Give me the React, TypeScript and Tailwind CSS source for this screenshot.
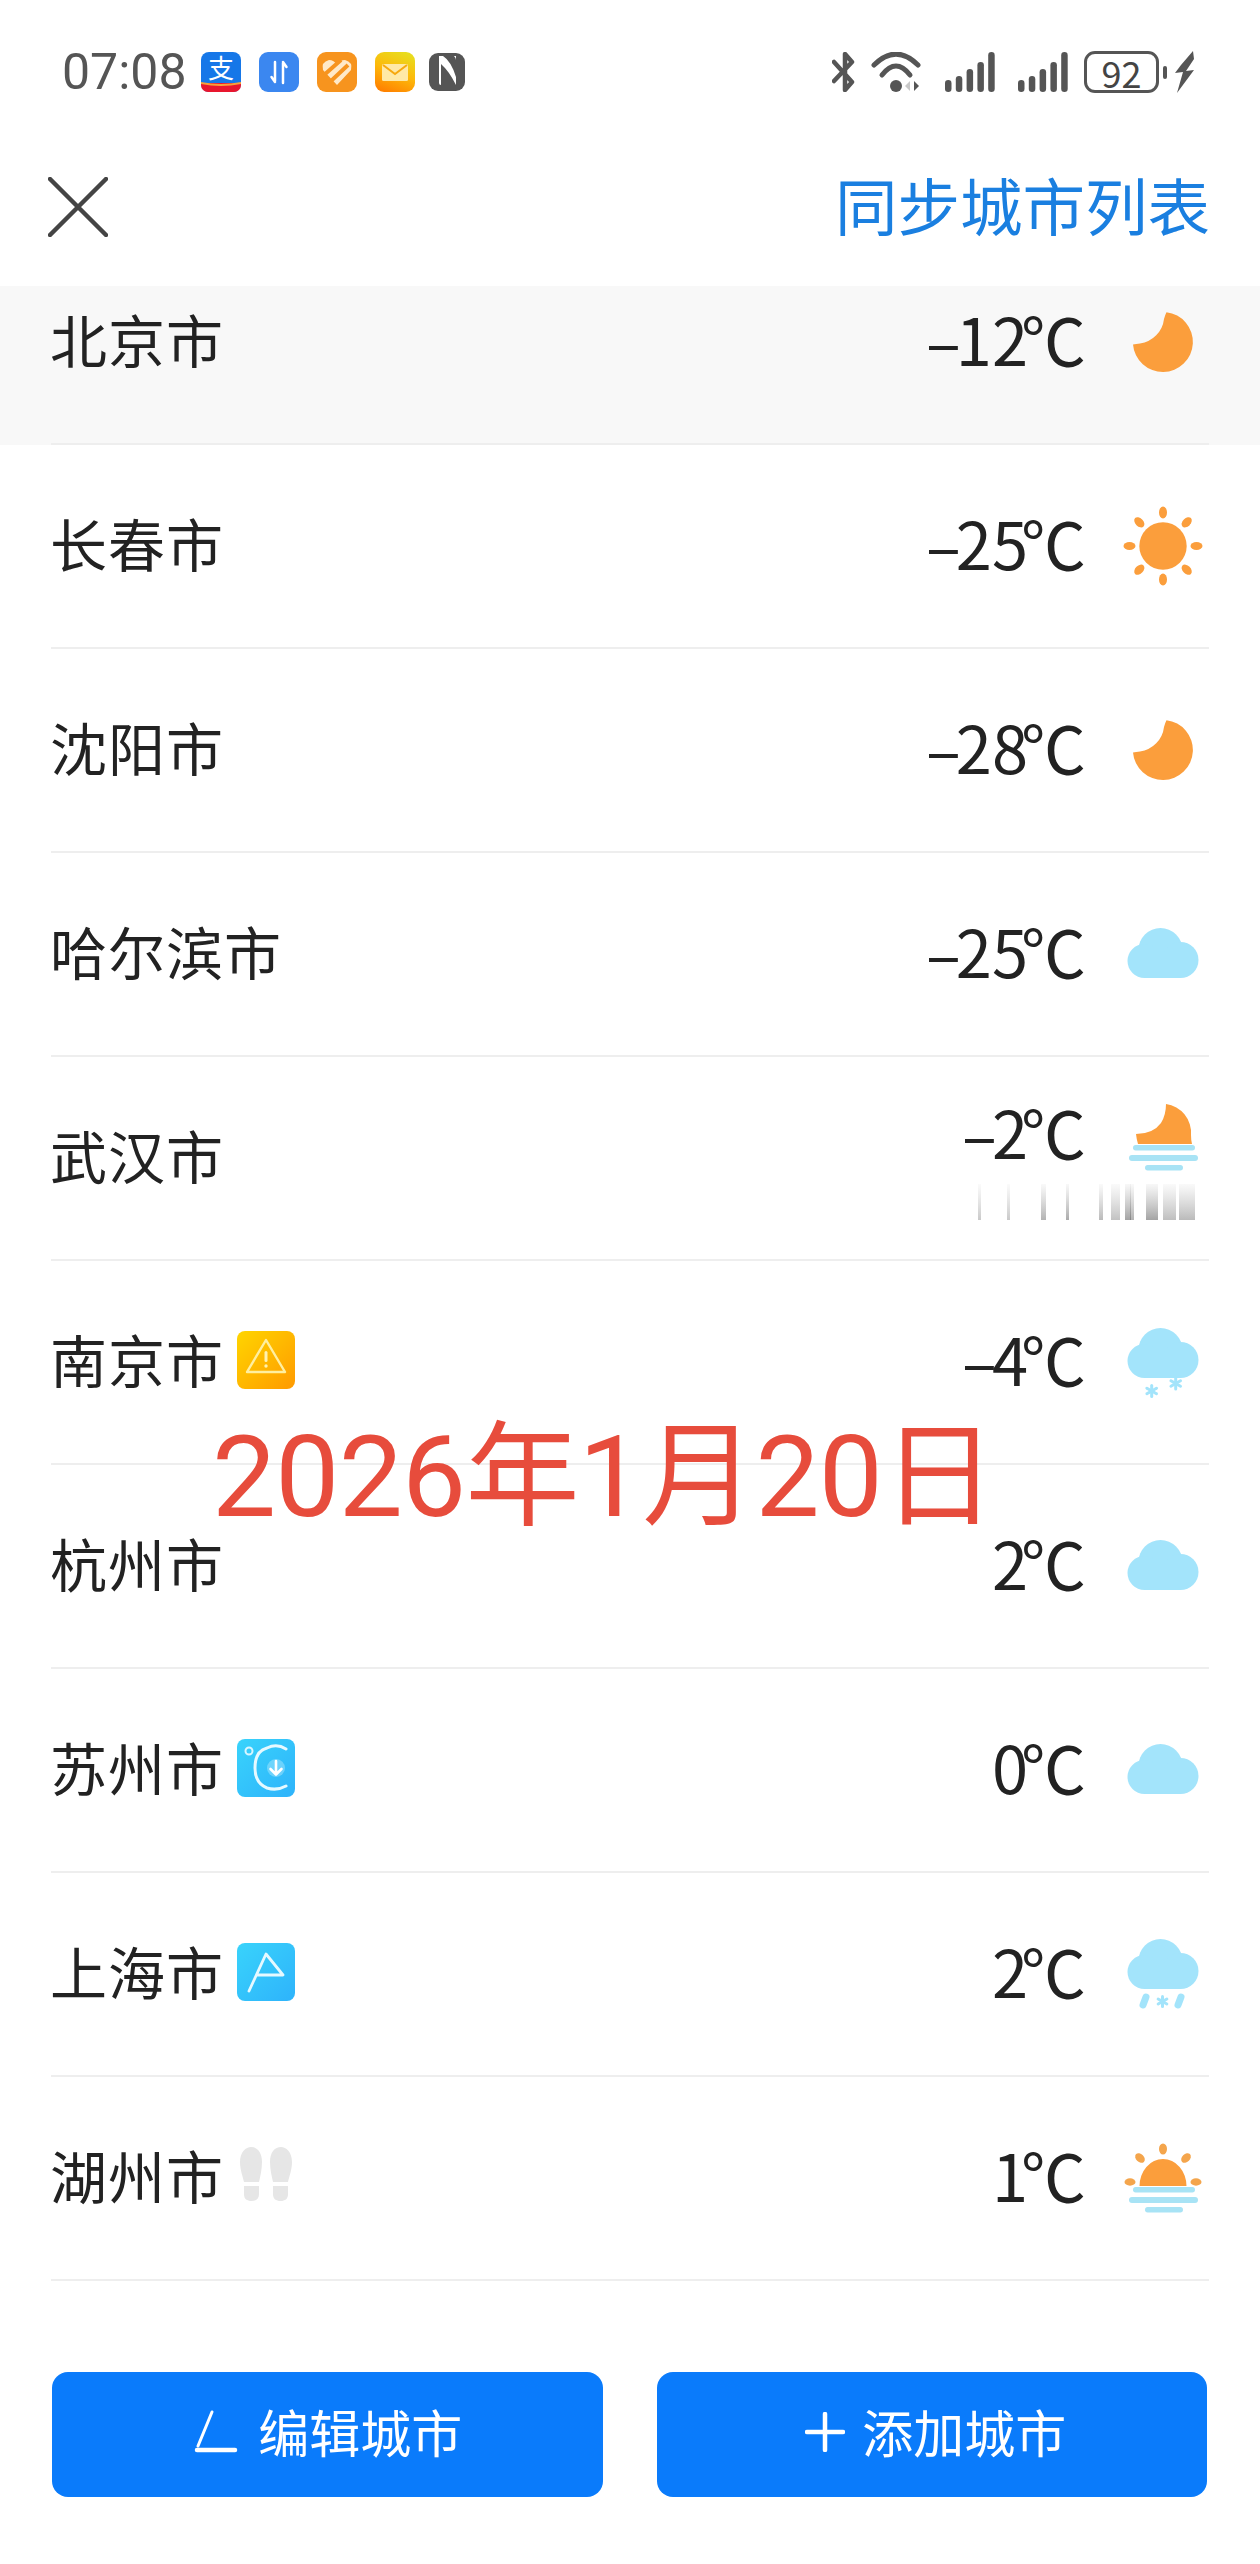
import React from "react";

const BLUE = "#a3e4fb";
const ORANGE = "#fb9e3c";
const HAZE = "#a8e3f5";

function Box({ children }: { children: React.ReactNode }) {
  return (
    <svg width="80" height="80" viewBox="0 0 80 80" className="shrink-0">
      {children}
    </svg>
  );
}

function CloudShape({ y }: { y: number }) {
  return (
    <g fill={BLUE} transform={`translate(4.5 ${y})`}>
      <circle cx="33" cy="22" r="22" />
      <circle cx="53" cy="32" r="18" />
      <circle cx="17" cy="33" r="17" />
      <rect x="17" y="24" width="36" height="26" />
    </g>
  );
}

function Moon() {
  return (
    <Box>
      <path d="M43.5 10.2A30 30 0 1 1 10 42.5Q13 42 17 41.5A28 28 0 0 0 41 17Q42 13 43.5 10.2Z" fill={ORANGE} />
    </Box>
  );
}

function Sun() {
  const rays = [0, 45, 90, 135, 180, 225, 270, 315];
  return (
    <Box>
      <circle cx="40" cy="40" r="23.7" fill={ORANGE} />
      {rays.map((a) => (
        <ellipse key={a} cx="40" cy="6.5" rx="4" ry="6" fill={ORANGE} transform={`rotate(${a} 40 40)`} />
      ))}
    </Box>
  );
}

function HazeLines({ y }: { y: number }) {
  return (
    <g fill={HAZE}>
      <rect x="10" y={y} width="62" height="5.5" rx="2.7" />
      <rect x="6" y={y + 10} width="69" height="6" rx="3" />
      <rect x="22" y={y + 20} width="38" height="5.5" rx="2.7" />
    </g>
  );
}

function MoonHaze() {
  return (
    <Box>
      <path d="M43 7A29 29 0 0 1 68 38Q68 43 69 47H15Q13.500 42 13 37Q30 37 38 26Q43 18 43 7Z" fill={ORANGE} />
      <HazeLines y={48} />
    </Box>
  );
}

function SunHaze() {
  return (
    <Box>
      <path d="M16.500 48A23.500 27 0 0 1 63.500 48Z" fill={ORANGE} />
      <ellipse cx="40" cy="11" rx="4" ry="5.500" fill="#f4a54c" />
      <ellipse cx="17" cy="20" rx="4" ry="5.500" fill="#f4a54c" transform="rotate(-45 17 20)" />
      <ellipse cx="63" cy="20" rx="4" ry="5.500" fill="#f4a54c" transform="rotate(45 63 20)" />
      <ellipse cx="7" cy="44" rx="5.500" ry="3.700" fill="#f4a54c" />
      <ellipse cx="73" cy="44" rx="5.500" ry="3.700" fill="#f4a54c" />
      <HazeLines y={49} />
    </Box>
  );
}

function Cloud() {
  return (
    <Box>
      <CloudShape y={14} />
    </Box>
  );
}

function Flake({ x, y, r }: { x: number; y: number; r: number }) {
  return (
    <g stroke={BLUE} strokeWidth="3" strokeLinecap="round" transform={`translate(${x} ${y})`}>
      <line x1="0" y1={-r} x2="0" y2={r} />
      <line x1={-r * 0.87} y1={-r / 2} x2={r * 0.87} y2={r / 2} />
      <line x1={-r * 0.87} y1={r / 2} x2={r * 0.87} y2={-r / 2} />
    </g>
  );
}

function SnowCloud() {
  return (
    <Box>
      <CloudShape y={6} />
      <Flake x={28.7} y={69} r={5.500} />
      <Flake x={52.7} y={61.500} r={5.500} />
    </Box>
  );
}

function SleetCloud() {
  return (
    <Box>
      <CloudShape y={5} />
      <line x1="23" y1="63" x2="20" y2="71" stroke={BLUE} strokeWidth="7" strokeLinecap="round" />
      <line x1="58" y1="63" x2="55" y2="71" stroke={BLUE} strokeWidth="7" strokeLinecap="round" />
      <Flake x={39.500} y={67.500} r={5} />
    </Box>
  );
}

function WarnTag() {
  return (
    <svg width="58" height="58" viewBox="0 0 58 58" className="block shrink-0">
      <defs>
        <linearGradient id="wg" x1="0" y1="0" x2="1" y2="1">
          <stop offset="0" stopColor="#ffd500" />
          <stop offset="1" stopColor="#ff9a00" />
        </linearGradient>
      </defs>
      <rect width="58" height="58" rx="8" fill="url(#wg)" />
      <path d="M29 9L48 41H10Z" fill="none" stroke="#ffefa0" strokeWidth="2.400" strokeLinejoin="round" />
      <rect x="27.500" y="20" width="3" height="11" rx="1.500" fill="#fff2b0" />
      <circle cx="29" cy="35" r="1.700" fill="#fff2b0" />
    </svg>
  );
}

function TempTag() {
  return (
    <svg width="58" height="58" viewBox="0 0 58 58" className="block shrink-0">
      <defs>
        <linearGradient id="tg" x1="0" y1="0" x2="1" y2="1">
          <stop offset="0" stopColor="#39d3fb" />
          <stop offset="1" stopColor="#2eb3fb" />
        </linearGradient>
      </defs>
      <rect width="58" height="58" rx="8" fill="url(#tg)" />
      <circle cx="12" cy="12" r="3.500" fill="none" stroke="#d9f6ff" strokeWidth="2" />
      <path d="M49 10A19.500 19.500 0 0 0 30 9Q18 12 18 29Q18 44 30 49Q40 52 49 47" fill="none" stroke="#e6f9ff" strokeWidth="3" strokeLinecap="round" />
      <circle cx="39" cy="29" r="9" fill="#d9f6ff" opacity="0.35" />
      <path d="M39 22V35M33.500 30L39 35.500L44.500 30" fill="none" stroke="#fff" strokeWidth="2.600" strokeLinecap="round" strokeLinejoin="round" />
    </svg>
  );
}

function RouteTag() {
  return (
    <svg width="58" height="58" viewBox="0 0 58 58" className="block shrink-0">
      <defs>
        <linearGradient id="rg" x1="0" y1="0" x2="1" y2="1">
          <stop offset="0" stopColor="#39d3fb" />
          <stop offset="1" stopColor="#2eb3fb" />
        </linearGradient>
      </defs>
      <rect width="58" height="58" rx="8" fill="url(#rg)" />
      <path d="M12 48L29 11L46 32H20" fill="none" stroke="#e6f9ff" strokeWidth="2.800" strokeLinecap="round" strokeLinejoin="round" />
    </svg>
  );
}

function StepsTag() {
  return (
    <svg width="58" height="58" viewBox="0 0 58 58" className="block shrink-0">
      <g fill="#e6e6e6">
        <path d="M3 15C3 5 9 0 14 0C20 0 25 5 25 15C25 23 23 30 22 35H7C6 30 3 23 3 15Z" />
        <path d="M7 39H22V47C22 52 19 54 14.500 54C10 54 7 52 7 47Z" />
        <path d="M33 15C33 5 38 0 44 0C49 0 55 5 55 15C55 23 52 30 51 35H36C35 30 33 23 33 15Z" />
        <path d="M36 39H51V47C51 52 48 54 43.500 54C39 54 36 52 36 47Z" />
      </g>
    </svg>
  );
}

function Redacted() {
  const bars: [number, number, number][] = [
    [0, 3, 0.35], [29, 3, 0.35], [63, 5, 0.5], [88, 3, 0.55], [121, 4, 0.45], [133, 9, 0.4], [147, 6, 0.6], [152, 4, 0.5],
    [168, 12, 0.6], [185, 13, 0.42], [201, 16, 0.45],
  ];
  return (
    <svg width="217" height="36" viewBox="0 0 217 36" className="block">
      <defs>
        <linearGradient id="rd" x1="0" y1="0" x2="0" y2="1">
          <stop offset="0" stopColor="#888" stopOpacity="0.1" />
          <stop offset="1" stopColor="#666" stopOpacity="1" />
        </linearGradient>
      </defs>
      {bars.map(([x, w, o]) => (
        <rect key={x} x={x} y="0" width={w} height="36" fill="url(#rd)" opacity={o} />
      ))}
    </svg>
  );
}

type City = { name: string; neg?: boolean; deg: string; icon: React.ReactNode; tag?: React.ReactNode; sub?: boolean; active?: boolean };

const cities: City[] = [
  { name: "北京市", neg: true, deg: "12", icon: <Moon />, active: true },
  { name: "长春市", neg: true, deg: "25", icon: <Sun /> },
  { name: "沈阳市", neg: true, deg: "28", icon: <Moon /> },
  { name: "哈尔滨市", neg: true, deg: "25", icon: <Cloud /> },
  { name: "武汉市", neg: true, deg: "2", icon: <MoonHaze />, sub: true },
  { name: "南京市", neg: true, deg: "4", icon: <SnowCloud />, tag: <WarnTag /> },
  { name: "杭州市", deg: "2", icon: <Cloud /> },
  { name: "苏州市", deg: "0", icon: <Cloud />, tag: <TempTag /> },
  { name: "上海市", deg: "2", icon: <SleetCloud />, tag: <RouteTag /> },
  { name: "湖州市", deg: "1", icon: <SunHaze />, tag: <StepsTag /> },
];

function Row({ c }: { c: City }) {
  return (
    <div className={c.active ? "bg-[#f8f8f8]" : "bg-white"}>
      <div className="relative mx-[51px] flex h-[204px] items-center justify-between border-b-2 border-[#eeeeee]">
        <div className="flex items-center gap-[13px]">
          <span className="-ml-[1px] -translate-y-[4px] text-[57px] leading-none tracking-[1px] text-[#222222]">{c.name}</span>
          {c.tag && <span className="-translate-y-[2px]">{c.tag}</span>}
        </div>
        <div className="flex items-center pr-[6px]">
          <div className="relative mr-[37px] flex flex-col items-end">
            <span className={`block whitespace-nowrap text-[65px] leading-none text-[#222222] ${c.sub ? "-translate-y-[27px]" : "-translate-y-[4px]"}`}>
              {c.neg && <span className="tracking-[-5px]">–</span>}
              {c.deg.slice(0, -1)}
              <span className="tracking-[-7px]">{c.deg.slice(-1)}</span>℃
            </span>
            {c.sub && (
              <div className="absolute right-[-109px] top-[58px]">
                <Redacted />
              </div>
            )}
          </div>
          <div className={c.sub ? "-translate-y-[21px]" : ""}>{c.icon}</div>
        </div>
      </div>
    </div>
  );
}

function StatusApps() {
  return (
    <div className="ml-[14px] flex items-center">
      <svg width="40" height="40" viewBox="0 0 40 40" className="shrink-0 overflow-visible">
        <rect width="40" height="40" rx="8" fill="#1677e8" />
        <path d="M0 31H40V33A7 7 0 0 1 33 40H7A7 7 0 0 1 0 33Z" fill="#e8162e" />
        <path d="M0 30Q20 34 40 30V32Q20 36 0 32Z" fill="#f7a13a" />
        <text x="20" y="26" textAnchor="middle" fontSize="26" fill="#fff" fontFamily="'Noto Sans CJK SC',sans-serif">支</text>
      </svg>
      <svg width="40" height="40" viewBox="0 0 40 40" className="ml-[18px] shrink-0">
        <rect width="40" height="40" rx="9" fill="#3b87f0" />
        <path d="M16 10V29M12.500 25L16 30M24 31V11M24 10L27.500 15" fill="none" stroke="#fff" strokeWidth="2.500" strokeLinecap="round" />
      </svg>
      <svg width="40" height="40" viewBox="0 0 40 40" className="ml-[18px] shrink-0">
        <rect width="40" height="40" rx="9" fill="#f7941e" />
        <path d="M20 33L6 18Q4 10 12 8Q17 8 20 13Q23 8 28 8Q36 10 34 18Z" fill="#ffe9c8" />
        <path d="M7 23L24 8M14 29L31 13" stroke="#f7941e" strokeWidth="4" />
      </svg>
      <svg width="40" height="40" viewBox="0 0 40 40" className="ml-[18px] shrink-0">
        <defs>
          <linearGradient id="mg" x1="0.7" y1="0" x2="0.3" y2="1">
            <stop offset="0" stopColor="#e8dc1e" />
            <stop offset="0.5" stopColor="#fdb90a" />
            <stop offset="1" stopColor="#ff8200" />
          </linearGradient>
        </defs>
        <rect width="40" height="40" rx="9" fill="url(#mg)" />
        <rect x="7" y="12" width="26" height="17" rx="1.500" fill="#ffe9a6" />
        <path d="M8 13L20 22L32 13" fill="none" stroke="#f7a80d" strokeWidth="2" />
      </svg>
      <svg width="36" height="38" viewBox="0 0 36 38" className="ml-[14px] shrink-0">
        <rect width="36" height="38" rx="9" fill="#555555" />
        <path d="M10 3H14Q22 8 27 24V7Q27 5 25 3H27V32Q20 18 12 11V32Q10 32 10 30Z" fill="#fff" />
      </svg>
    </div>
  );
}

function Signal() {
  return (
    <svg width="50" height="40" viewBox="0 0 50 40" className="shrink-0" fill="#555">
      <rect x="0" y="28" width="6.500" height="12" rx="3.200" />
      <rect x="10.800" y="24" width="6.500" height="16" rx="3.200" />
      <rect x="21.600" y="17" width="6.500" height="23" rx="3.200" />
      <rect x="32.400" y="10" width="6.500" height="30" rx="3.200" />
      <rect x="43.200" y="0" width="6.500" height="40" rx="3.200" />
    </svg>
  );
}

function StatusRight() {
  return (
    <div className="flex items-center">
      <svg width="24" height="40" viewBox="0 0 24 40" className="shrink-0">
        <path d="M2 29L20 10L13 2V38L20 30L2 10" fill="none" stroke="#555" strokeWidth="4.500" strokeLinejoin="round" strokeLinecap="round" />
      </svg>
      <svg width="50" height="40" viewBox="0 0 50 40" className="ml-[15px] shrink-0">
        <path d="M3 13Q25 -9 47 13" fill="none" stroke="#555" strokeWidth="5" strokeLinecap="round" />
        <path d="M11 23Q25 5 39 23" fill="none" stroke="#555" strokeWidth="5" strokeLinecap="round" />
        <circle cx="25" cy="34" r="6" fill="#555" />
        <path d="M39 29V39L34 34Z" fill="#c9c9c9" />
        <path d="M43 29L48 34L43 39Z" fill="#555" />
      </svg>
      <div className="ml-[24px]">
        <Signal />
      </div>
      <div className="ml-[23px]">
        <Signal />
      </div>
      <div className="ml-[16px] flex h-[42px] w-[75px] items-center justify-center rounded-[11px] border-[3px] border-[#555555] text-[36px] leading-none text-[#444444]">
        92
      </div>
      <div className="ml-[4px] h-[13px] w-[4px] rounded-full bg-[#555555]" />
      <svg width="20" height="42" viewBox="0 0 20 42" className="ml-[8px] shrink-0">
        <path d="M18 0L6 14L0 22L8 21L2 42L19 19L11 20L19 8Z" fill="#555" />
      </svg>
    </div>
  );
}

export default function App() {
  return (
    <div className="relative h-[2564px] w-[1260px] overflow-hidden bg-white font-['Noto_Sans_CJK_SC',sans-serif]">
      <div className="flex h-[128px] items-start justify-between pl-[62px] pr-[65px] pt-[51px]">
        <div className="flex items-center">
          <span className="-my-[8px] font-['Roboto',sans-serif] text-[50px] leading-[58px] text-[#555555]">07:08</span>
          <StatusApps />
        </div>
        <StatusRight />
      </div>

      <div className="flex h-[158px] items-center justify-between pl-[48px] pr-[50px]">
        <svg width="60" height="60" viewBox="0 0 60 60" className="shrink-0">
          <path d="M2 2L58 58M58 2L2 58" stroke="#444444" strokeWidth="4.500" strokeLinecap="round" />
        </svg>
        <span className="-translate-y-[3px] text-[62.500px] leading-none text-[#1a7fe0]">同步城市列表</span>
      </div>

      <div className="overflow-hidden">
        <div className="-mt-[45px]">
          {cities.map((c) => (
            <Row key={c.name} c={c} />
          ))}
        </div>
      </div>

      <div className="mt-[91px] flex gap-[54px] pl-[52px] pr-[53px]">
        <button className="flex h-[125px] w-[551px] items-center justify-center rounded-[16px] bg-[#0a7bfb] pb-[6px] pl-[2px] text-[51px] leading-none text-white">
          <svg width="44" height="44" viewBox="0 0 44 44" className="mr-[20px] shrink-0">
            <path d="M18 2L4 36" stroke="#fff" strokeWidth="3" strokeLinecap="round" />
            <path d="M3 40H41" stroke="#fff" strokeWidth="4.500" strokeLinecap="round" />
          </svg>
          编辑城市
        </button>
        <button className="flex h-[125px] w-[551px] items-center justify-center rounded-[16px] bg-[#0a7bfb] pb-[6px] pl-[8px] text-[51px] leading-none text-white">
          <svg width="40" height="40" viewBox="0 0 40 40" className="mr-[17px] shrink-0">
            <path d="M2 20H38M20 2V38" stroke="#fff" strokeWidth="4.500" strokeLinecap="round" />
          </svg>
          添加城市
        </button>
      </div>

      <div className="absolute left-[212px] top-[1407px] whitespace-nowrap font-['Roboto','Noto_Sans_CJK_SC',sans-serif] text-[114px] font-normal leading-[140px] tracking-[-0.700px] text-[#e74c3c]">
        2026年1月20日
      </div>
    </div>
  );
}
